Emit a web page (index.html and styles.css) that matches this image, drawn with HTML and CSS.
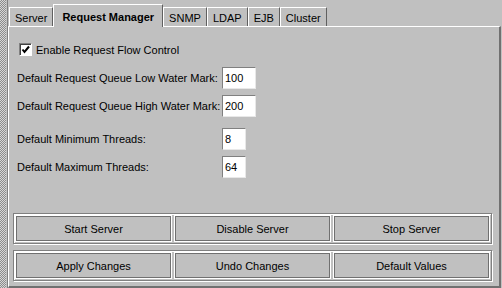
FILE: index.html
```html
<!DOCTYPE html>
<html lang="en">
<head>
    <meta charset="UTF-8">
    <title>Request Manager</title>
    <link rel="stylesheet" href="styles.css">
</head>
<body>
    <div class="splitter"></div>
    <div class="tabbed">
        <div class="tabs">
            <div class="tab">Server</div>
            <div class="tab active">Request Manager</div>
            <div class="tab">SNMP</div>
            <div class="tab">LDAP</div>
            <div class="tab">EJB</div>
            <div class="tab">Cluster</div>
        </div>

        <div class="panel">
            <div class="check-row">
                <span class="check-box">
                    <svg width="9" height="9" viewBox="0 0 9 9"><polyline points="1.5,4.5 3.5,7 8,1.5" fill="none" stroke="#000" stroke-width="2"/></svg>
                </span>
                Enable Request Flow Control
            </div>

            <div class="fields">
                <div class="field-group">
                    <div class="field">
                        <span class="label">Default Request Queue Low Water Mark:</span>
                        <span class="input wide">100</span>
                    </div>
                    <div class="field">
                        <span class="label">Default Request Queue High Water Mark:</span>
                        <span class="input wide">200</span>
                    </div>
                </div>
                <div class="field-group">
                    <div class="field">
                        <span class="label">Default Minimum Threads:</span>
                        <span class="input">8</span>
                    </div>
                    <div class="field">
                        <span class="label">Default Maximum Threads:</span>
                        <span class="input">64</span>
                    </div>
                </div>
            </div>

            <div class="actions">
                <div class="btn-group">
                    <button class="btn">Start Server</button>
                    <button class="btn">Disable Server</button>
                    <button class="btn">Stop Server</button>
                </div>
                <div class="btn-group">
                    <button class="btn">Apply Changes</button>
                    <button class="btn">Undo Changes</button>
                    <button class="btn">Default Values</button>
                </div>
            </div>
        </div>
    </div>
</body>
</html>
```

FILE: styles.css
```css
* {
    box-sizing: border-box;
}

body {
    margin: 0;
    width: 502px;
    height: 288px;
    overflow: hidden;
    display: flex;
    background: #c0c0c0;
    font-family: "Liberation Sans", Arial, sans-serif;
    font-size: 11px;
    color: #000;
}

/* dotted split-pane handle on the left */
.splitter {
    width: 8px;
    border-right: 1px solid #808080;
    background: repeating-conic-gradient(#8c8c8c 0 25%, #d6d6d6 0 50%) 0 0 / 2px 2px;
    box-shadow: inset -1px 0 0 #c0c0c0;
}

.tabbed {
    flex: 1;
    display: flex;
    flex-direction: column;
    margin-right: 1px;
}

.tabs {
    height: 26px;
    display: flex;
    align-items: flex-end;
    padding-left: 1px;
}

.tab {
    height: 19px;
    padding: 2px 5px 0;
    line-height: 16px;
    border-top: 1px solid #fff;
    border-left: 1px solid #fff;
    border-right: 1px solid #606060;
    white-space: nowrap;
}

.tab.active {
    position: relative;
    z-index: 1;
    height: 23px;
    margin-bottom: -1px;
    padding: 4px 8px 0;
    background: #c0c0c0;
    font-weight: bold;
}

.panel {
    flex: 1;
    display: flex;
    flex-direction: column;
    border-top: 1px solid #fff;
    border-left: 1px solid #fff;
    border-right: 2px solid #707070;
    border-bottom: 2px solid #707070;
}

.check-row {
    display: flex;
    align-items: center;
    gap: 4px;
    height: 13px;
    margin: 16px 0 0 10px;
}

.check-box {
    width: 13px;
    height: 13px;
    display: flex;
    align-items: center;
    justify-content: center;
    background: #fff;
    border: 1px solid;
    border-color: #808080 #fff #fff #808080;
    box-shadow: inset 1px 1px 0 #404040;
}

.fields {
    display: flex;
    flex-direction: column;
    gap: 11px;
    margin: 11px 0 0 8px;
}

.field-group {
    display: flex;
    flex-direction: column;
    gap: 6px;
}

.field {
    display: flex;
    align-items: center;
    height: 22px;
}

.label {
    width: 205px;
}

.input {
    width: 24px;
    height: 22px;
    padding-left: 2px;
    line-height: 20px;
    background: #fff;
    border: 1px solid;
    border-color: #808080 #e8e8e8 #e8e8e8 #808080;
}

.input.wide {
    width: 34px;
}

.actions {
    margin-top: auto;
    display: flex;
    flex-direction: column;
    gap: 6px;
    padding: 0 7px 5px 4px;
}

.btn-group {
    display: flex;
    gap: 2px;
    height: 31px;
    padding: 1px;
    border: 1px solid #808080;
    box-shadow: inset 1px 1px 0 #fff, 1px 1px 0 #fff;
}

.btn {
    flex: 1;
    margin: 0;
    padding: 0;
    background: #c0c0c0;
    font: inherit;
    color: #000;
    border: 1px solid #fff;
    box-shadow: inset 0 0 0 1px #707070;
}
```
